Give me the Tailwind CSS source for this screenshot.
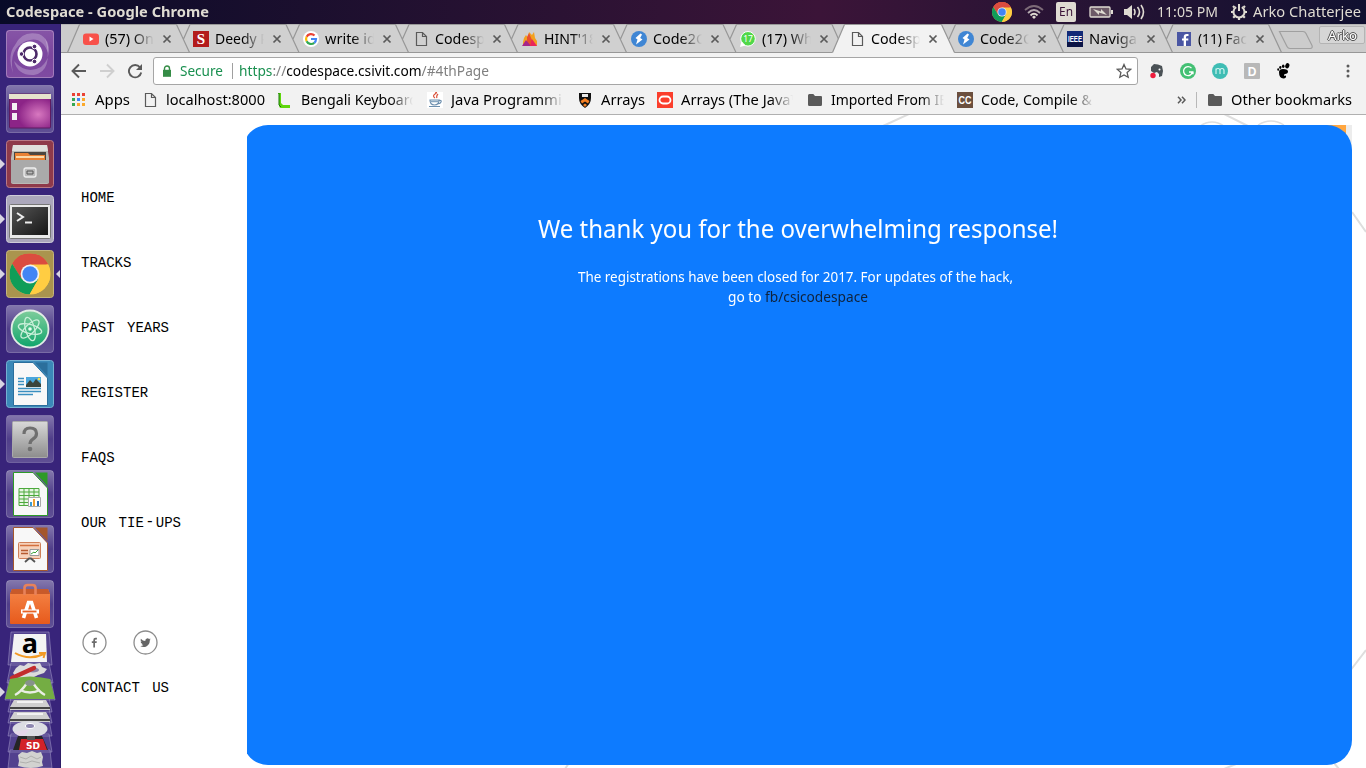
<!DOCTYPE html>
<html lang="en">
<head>
<meta charset="utf-8">
<title>Codespace</title>
<script src="https://cdn.jsdelivr.net/npm/@tailwindcss/browser@4"></script>
</head>
<body class="w-[1366px] h-[768px] overflow-hidden flex flex-col bg-white text-black text-[14px] leading-[20px] font-['Noto_Sans',sans-serif]">

<!-- Shared symbols -->
<svg class="absolute w-0 h-0">
  <symbol id="chrome" viewBox="0 0 48 48">
    <circle cx="24" cy="24" r="24" fill="#ffcd42"/>
    <path d="M24 24 L3.2 12 A24 24 0 0 1 44.8 12 Z" fill="#db4437"/>
    <path d="M24 13 H45.3 A24 24 0 0 0 3.2 12 L14 30 Z" fill="#db4c3f"/>
    <path d="M3.2 12 A24 24 0 0 0 23.5 48 L34 29.5 L24 24 L14.5 30 Z" fill="#109d58"/>
    <path d="M45.3 13 H24 L34 29.5 L23.5 48 A24 24 0 0 0 45.3 13Z" fill="#ffcd42"/>
    <circle cx="24" cy="24" r="11" fill="#f1f1f1"/><circle cx="24" cy="24" r="9" fill="#4285f4"/>
  </symbol>
  <symbol id="page" viewBox="0 0 16 16"><path d="M3.5 1.5h6l4 4v9h-10z M9.5 1.5v4h4" fill="none" stroke="#5a5a5a" stroke-width="1.2"/></symbol>
  <symbol id="folder" viewBox="0 0 16 16"><path d="M1 3.5Q1 2 2.3 2h4l1.7 2h6Q15 4 15 5.300v7.2Q15 14 13.700 14H2.3Q1 14 1 12.500z" fill="#5a5a5a"/></symbol>
  <symbol id="x" viewBox="0 0 10 10"><path d="M1.500 1.500l7 7M8.500 1.500l-7 7" stroke="#5a5a5a" stroke-width="1.700"/></symbol>
  <symbol id="bolt" viewBox="0 0 16 16"><circle cx="8" cy="8" r="8" fill="#3f86d4"/><path d="M9.500 2.500L4.500 7l2 1.500L5 13.500l6.500-5-2.300-1.500L11 3.500z" fill="#fff"/></symbol>
  <linearGradient id="gl" x2="0" y2="1"><stop stop-color="#fff" stop-opacity=".38"/><stop offset=".5" stop-color="#fff" stop-opacity=".12"/><stop offset="1" stop-color="#fff" stop-opacity=".2"/></linearGradient>
  <radialGradient id="pk" cx=".7" cy=".6"><stop stop-color="#d878c0"/><stop offset="1" stop-color="#8c2487"/></radialGradient>
  <linearGradient id="gr" x2="0" y2="1"><stop stop-color="#d8d8d8"/><stop offset="1" stop-color="#8d8d8d"/></linearGradient>
  <linearGradient id="dk" x2="1" y2="1"><stop stop-color="#555"/><stop offset="1" stop-color="#151515"/></linearGradient>
  <linearGradient id="at" x2="0" y2="1"><stop stop-color="#7fcd9c"/><stop offset="1" stop-color="#0fa56b"/></linearGradient>
  <linearGradient id="og" x2="0" y2="1"><stop stop-color="#f58547"/><stop offset="1" stop-color="#e75a1c"/></linearGradient>
  <symbol id="doc" viewBox="0 0 48 48"><path d="M7.500 2.500H27L41.500 18v27.500H7.500z" fill="#f8f8f8" stroke="currentColor"/><path d="M29 2.500h12.500V16z" fill="currentColor"/></symbol>
</svg>

<!-- Top panel -->
<header class="h-[24px] shrink-0 flex items-center pl-[6px] pr-[5px] text-[#dfdbd2] bg-linear-to-r from-[#080a28] via-[#3b1438] via-60% to-[#101030]">
  <span data-w="203" class="font-bold">Codespace - Google Chrome</span>
  <div class="ml-auto flex items-center">
    <svg class="w-[20px] h-[20px] mr-[12px]"><use href="#chrome"/></svg>
    <svg class="w-[20px] h-[16px] mr-[12px]" viewBox="0 0 20 16" fill="none" stroke-width="1.800"><path d="M1 6Q10-2 19 6" stroke="#7d6b78"/><path d="M4 9Q10 3 16 9" stroke="#b5aab0"/><path d="M6.500 11.500Q10 8 13.500 11.500" stroke="#dfdbd2"/><path d="M8 13l2-1.500 2 1.500-2 2z" fill="#dfdbd2"/></svg>
    <span class="w-[20px] h-[20px] mr-[13px] rounded-[2px] bg-[#dfdbd2] text-[#3b1438] text-[12px] leading-[20px] flex justify-center"><span data-w="14">En</span></span>
    <svg class="w-[24px] h-[12px] mr-[11px]" viewBox="0 0 24 12"><rect x="1" y="1" width="20" height="10" rx="1" fill="#6d5a68" stroke="#dfdbd2" stroke-width="1.300"/><path d="M22 4h2v4h-2z" fill="#dfdbd2"/><path d="M4 3l8 2.500V3l6 6-8-2.500V9z" fill="#dfdbd2"/></svg>
    <svg class="w-[21px] h-[16px] mr-[12px]" viewBox="0 0 21 16" fill="none" stroke="#dfdbd2" stroke-width="1.600"><path d="M0 5h3l5-4v14l-5-4H0z" fill="#dfdbd2" stroke="none"/><path d="M10 5q2 3 0 6M13.500 3q4 5 0 10M17 1q5 7 0 14"/></svg>
    <span data-w="61">11:05 PM</span>
    <svg class="w-[18px] h-[18px] ml-[12px] mr-[5px]" viewBox="0 0 18 18" fill="none" stroke="#dfdbd2"><path d="M6.200 4.200a5.500 5.500 0 1 0 5.600 0" stroke-width="2"/><path d="M9 1v7" stroke-width="2"/><path d="M9 14.500V17M3.500 9H1M17 9h-2.500M5 13l-1.800 1.800M13 13l1.800 1.800M4.500 4.500L3 3M13.500 4.500L15 3" stroke-width="2.200"/></svg>
    <span data-w="108">Arko Chatterjee</span>
  </div>
</header>

<div class="flex flex-1 min-h-0">
<!-- Launcher -->
<aside class="w-[61px] shrink-0 h-[744px] pt-[6px] pl-[6px] flex flex-col gap-[7px] bg-[#38247a] border-r border-[#2d1d66] relative overflow-hidden">
  <svg class="size-[48px] shrink-0" viewBox="0 0 48 48"><rect width="48" height="48" rx="3" fill="#773f9b"/><path d="M7 43Q2 19 20 11Q36 5 42 23Q45 10 33 4Q16 0 9 15Q1 25 7 43z" fill="#fff" opacity=".25"/><path d="M39 8Q48 26 35 37Q20 45 8 31Q12 46 28 45Q48 41 39 8z" fill="#fff" opacity=".25"/><circle cx="24" cy="24" r="12.500" fill="#fff"/><circle cx="24" cy="24" r="6.500" fill="none" stroke="#442062" stroke-width="2.600"/><g fill="#442062" stroke="#fff"><circle cx="15.500" cy="24" r="2.300"/><circle cx="28.500" cy="16.500" r="2.300"/><circle cx="28.500" cy="31.500" r="2.300"/></g><rect x=".5" y=".5" width="47" height="47" rx="3" fill="url(#gl)" fill-opacity=".3" stroke="#fff" stroke-opacity=".3"/></svg>
  <svg class="size-[48px] shrink-0" viewBox="0 0 48 48"><rect x=".5" y=".5" width="47" height="47" rx="3" fill="url(#gl)" stroke="#fff" stroke-opacity=".25"/><rect x="3.500" y="9" width="41" height="34" rx="1" fill="url(#pk)" stroke="#5e1b60"/><path d="M3 9h42v5H3z" fill="#e6e3cc"/><path d="M6 18h5v7H6zM6 28h5v7H6z" fill="#f4f0f4"/></svg>
  <svg class="size-[48px] shrink-0" viewBox="0 0 48 48"><rect x=".5" y=".5" width="47" height="47" rx="3" fill="#8e3a4a" stroke="#b97a86"/><path d="M7 5h34l2 13v24q0 2-2 2H7q-2 0-2-2V18z" fill="#b9b9b5"/><path d="M7 5h34l1 6H6z" fill="#e0e0dd"/><path d="M8 12h32v10H8z" fill="#4c4640"/><path d="M9 13h13l2 2h15v6H9z" fill="#e98134"/><path d="M10 17h28" stroke="#fbd9a9" stroke-width="2"/><path d="M5 20h38v23H5z" fill="#aaa"/><rect x="18" y="28" width="12" height="9" rx="2" fill="#bbb" stroke="#eee" stroke-width="1.300"/><path d="M21 31h6v3h-6z" fill="none" stroke="#555"/></svg>
  <svg class="size-[48px] shrink-0" viewBox="0 0 48 48"><rect x=".5" y=".5" width="47" height="47" rx="3" fill="#aba7bb" stroke="#cfccd8"/><rect x="3.500" y="9.500" width="41" height="34" rx="1" fill="#e9e9e9" stroke="#777"/><rect x="6" y="12" width="36" height="28" fill="url(#dk)"/><path d="M11 18l6 4-6 4M19 27.500h7" fill="none" stroke="#eee" stroke-width="2"/></svg>
  <svg class="size-[48px] shrink-0" viewBox="0 0 48 48"><rect x=".5" y=".5" width="47" height="47" rx="3" fill="#aa944e" stroke="#c5b57e"/><use href="#chrome" x="3.500" y="3.500" width="41" height="41"/></svg>
  <svg class="size-[48px] shrink-0" viewBox="0 0 48 48"><rect x=".5" y=".5" width="47" height="47" rx="3" fill="url(#gl)" stroke="#fff" stroke-opacity=".25"/><circle cx="24" cy="24" r="18.500" fill="url(#at)" stroke="#e2ede6" stroke-width="1.800"/><g fill="none" stroke="#c9efd9" stroke-width="1.300"><ellipse cx="24" cy="24" rx="12" ry="4.500" transform="rotate(15 24 24)"/><ellipse cx="24" cy="24" rx="12" ry="4.500" transform="rotate(75 24 24)"/><ellipse cx="24" cy="24" rx="12" ry="4.500" transform="rotate(135 24 24)"/></g><circle cx="24" cy="24" r="1.800" fill="#e6fff0"/></svg>
  <svg class="size-[48px] shrink-0 text-[#2b6f9c]" viewBox="0 0 48 48"><rect x=".5" y=".5" width="47" height="47" rx="3" fill="#3b88b8" stroke="#75b0d2"/><use href="#doc"/><path d="M12 18.500h6M12 21.500h6M12 24.500h6M12 28.500h23M12 31.500h23M12 34.500h15" stroke="#3a8fc0" stroke-width="1.500"/><path d="M20 17h15v10H20z" fill="#4ba7dc"/><path d="M20 25l4-5 3 3 3-4 5 5v3H20z" fill="#39443c"/><circle cx="33" cy="19" r="1.300" fill="#f3e14c"/></svg>
  <svg class="size-[48px] shrink-0" viewBox="0 0 48 48"><rect x=".5" y=".5" width="47" height="47" rx="3" fill="url(#gl)" stroke="#fff" stroke-opacity=".2"/><rect x="6.500" y="6.500" width="35" height="36" rx="1" fill="url(#gr)" stroke="#aaa"/><path d="M18 19q0-6 6-6 6.500 0 6.500 5.500 0 3.500-3.500 5.500-3 2-3 5" fill="none" stroke="#6f6f6f" stroke-width="3.200"/><circle cx="24" cy="34" r="2.300" fill="#6f6f6f"/></svg>
  <svg class="size-[48px] shrink-0 text-[#2e9a28]" viewBox="0 0 48 48"><rect x=".5" y=".5" width="47" height="47" rx="3" fill="url(#gl)" stroke="#fff" stroke-opacity=".25"/><use href="#doc"/><path d="M13 18.500h20v17H13zM13 22h20M13 25.500h20M13 29h20M13 32.500h20M18 18v17M23 18v17M28 18v17" fill="#e8f6e4" stroke="#4da93d"/><path d="M22.500 27.500h12v9h-12z" fill="#fff" stroke="#aaa"/><path d="M24 32h2v4h-2z" fill="#3d9bd0"/><path d="M27 29h2v7h-2z" fill="#f0a030"/><path d="M31 31h2v5h-2z" fill="#2a6db3"/></svg>
  <svg class="size-[48px] shrink-0 text-[#a4562c]" viewBox="0 0 48 48"><rect x=".5" y=".5" width="47" height="47" rx="3" fill="url(#gl)" stroke="#fff" stroke-opacity=".25"/><use href="#doc"/><rect x="12.500" y="17.500" width="22" height="16" rx="1" fill="#f6d2bc" stroke="#cf8059"/><path d="M14 20.500h19" stroke="#d4703f" stroke-width="1.500"/><path d="M15 25.500h7M15 28.500h7" stroke="#b65a30" stroke-width="1.500"/><path d="M24 24.500h9v6h-9z" fill="#fff" stroke="#999"/><path d="M25 29l3-2 1 1 3-3" fill="none" stroke="#3aa33a"/><path d="M19 37l4-3.500h2l4 3.500" fill="none" stroke="#555" stroke-width="1.800"/></svg>
  <svg class="size-[48px] shrink-0" viewBox="0 0 48 48"><rect x=".5" y=".5" width="47" height="47" rx="3" fill="url(#gl)" stroke="#fff" stroke-opacity=".25"/><path d="M6 9h36l2 5v29q0 1-1 1H5q-1 0-1-1V14z" fill="url(#og)"/><path d="M6 9h36l2 5H4z" fill="#c85a2a"/><path d="M18.500 15V8q0-3 3-3h5q3 0 3 3v7" fill="none" stroke="#e8825a" stroke-width="2.600"/><path d="M17.500 38l5-15.500h3l5 15.500" fill="none" stroke="#fff" stroke-width="3.600"/><path d="M15 31.500h18" stroke="#fff" stroke-width="4.200"/><path d="M16.500 31.500h14" stroke="#e96224" stroke-width="1.800"/></svg>
  <svg class="w-[61px] h-[140px] shrink-0 -ml-[6px] -mt-[7px]" viewBox="0 628 61 140">
    <g fill="#8f84bd" fill-opacity=".3" stroke="#a9a0cd" stroke-opacity=".5"><path d="M11 632h38l3 33H8zM11 663h38l4 20H7zM9 680h42l4 20H5zM11 698h38l3 14H8zM11 709h38l3 14H8zM11 720h38l3 16H8zM11 734h38l3 18H8zM10 750h40l2 18H8z"/></g>
    <path d="M14 634h32l1 28H11z" fill="#f3f3f3"/>
    <text x="30" y="653" text-anchor="middle" class="font-['Open_Sans'] font-bold" font-size="27">a</text>
    <path d="M15 653q14 8 29 1M39 653l6 0-1.500 5" fill="none" stroke="#f29a25" stroke-width="2"/>
    <path d="M16 668l4-3 4 1 4-3 6 1 6-1 2 4 5 2-3 4-6 2-6 3-8 1-8-2-3-4z" fill="#dcdcdc"/><ellipse cx="33" cy="670" rx="6" ry="2.500" fill="#8c86a8"/>
    <path d="M12 678L34 668" stroke="#c32d2d" stroke-width="4.500" stroke-linecap="round"/>
    <path d="M10 679q20-5 40 0l5 20H5z" fill="#74ad43"/><path d="M15 695Q21 692 27 683M45 695Q39 692 33 683M20 690q10 5 20 0" fill="none" stroke="#e9eee3" stroke-width="2.300"/><ellipse cx="30" cy="683" rx="5" ry="3" fill="#86928a"/>
    <path d="M14 700h32l4 7v3H10v-3zM14 712h32l4 7v3H10v-3z" fill="#cfcfcf"/><path d="M10 708h40M10 720h40" stroke="#444" stroke-width="2"/><path d="M17 702h26M17 714h26" stroke="#f2f2f2" stroke-width="2"/>
    <ellipse cx="30" cy="729" rx="17.500" ry="8" fill="#dcdde3"/><path d="M30 729L14 732q3 4 9 5z" fill="#e4d6e9"/><ellipse cx="30" cy="726" rx="4.500" ry="2.500" fill="#8e88b0" stroke="#fff"/>
    <path d="M18 736h24l6 14H13z" fill="#252525"/><path d="M21 739h22l4 11H19z" fill="#d3222a"/><path d="M27 736h8v4h-8z" fill="#555"/><text x="33" y="749" text-anchor="middle" class="font-['DejaVu_Sans'] font-bold" font-size="9" fill="#fff">SD</text>
    <path d="M18 755l4-3 5 1 5-2 5 2 4-1 2 5-1 5 1 4q-12 4-25 0l1-5z" fill="#d2d2d0"/><path d="M20 757l6 2 5-3 6 3 4-2M20 762l6 1 6-2 8 2" fill="none" stroke="#b0b0ae"/>
  </svg>
  <!-- running-window pips -->
  <svg class="absolute left-0 top-0 w-[61px] h-[744px]" viewBox="0 24 61 744" fill="#d8d5e2"><path d="M0 159l5 5-5 5zM0 214l5 5-5 5zM0 269l5 5-5 5zM0 379l5 5-5 5zM0 687l5 5-5 5zM61 269l-5 5 5 5z"/></svg>
</aside>

<main class="flex-1 min-w-0 flex flex-col">
  <!-- Tab strip -->
  <div class="h-[29px] shrink-0 relative flex bg-[#cccccc]">
    <svg class="absolute inset-0 w-[1305px] h-[29px]" viewBox="61 24 1305 29" fill="none" stroke="#979797" stroke-width="1.200">
      <path fill="#d0d0d0" stroke="none" d="M67 53L80 24.500H1269L1281 53z"/>
      <path d="M61 24.500H1366" stroke="#b5b5b5"/>
      <path d="M61 52.500H832.500M954 52.500H1366"/>
      <path d="M67.500 52.500L79.500 24.500H176.500L189.500 52.500M183.500 39L190 24.500H286L299 52.500M293 39L299.500 24.500H395.500L408.500 52.500M402.500 39L409 24.500H504.500L517.500 52.500M511.500 39L518 24.500H613.500L626.500 52.500M620.500 39L627 24.500H723L736 52.500M730 39L736.500 24.500H832L838.500 39M949 39L955.500 24.500H1050.500L1063.500 52.500M1057.500 39L1064 24.500H1159.500L1172.500 52.500M1166.500 39L1173 24.500H1268.500L1281.500 52.500"/>
      <path d="M832.500 53L844.500 24.500H941.500L954.500 53z" fill="#f2f2f2" stroke="none"/><path d="M832.500 52.500L844.500 24.500H941.500L954.500 52.500"/>
      <path d="M1279.500 31.500H1303q2 0 3 2l6 12q1 3-2 3H1290q-2 0-3-2z" stroke="#a0a0a0"/>
    </svg>
    <div class="relative flex items-center pl-[22px] h-[30px] w-full">
      <div class="w-[110px] shrink-0 flex items-center"><svg class="w-[16px] h-[16px] mr-[6px]" viewBox="0 0 16 16"><rect x="0" y="2.500" width="16" height="11.500" rx="3" fill="#f8514a"/><path d="M6.500 5.500v5l4-2.500z" fill="#fff"/></svg><span class="w-[50px] overflow-hidden whitespace-nowrap [mask-image:linear-gradient(to_right,black_55%,transparent_98%)]"><span data-w="49">(57) On</span></span><svg class="w-[10px] h-[10px] ml-[7px]"><use href="#x"/></svg></div>
      <div class="w-[110px] shrink-0 flex items-center"><svg class="w-[16px] h-[16px] mr-[6px]" viewBox="0 0 16 16"><rect width="16" height="16" fill="#b31b1b"/><text x="8" y="13" text-anchor="middle" class="font-['Liberation_Serif'] font-bold" font-size="15" fill="#fff">S</text></svg><span class="w-[50px] overflow-hidden whitespace-nowrap [mask-image:linear-gradient(to_right,black_55%,transparent_98%)]"><span data-w="54">Deedy R</span></span><svg class="w-[10px] h-[10px] ml-[7px]"><use href="#x"/></svg></div>
      <div class="w-[110px] shrink-0 flex items-center"><svg class="w-[16px] h-[16px] mr-[6px]" viewBox="0 0 16 16" fill="none" stroke-width="2.200"><circle cx="8" cy="8" r="8" fill="#fff"/><path d="M11.500 4.500A5 5 0 0 0 3.600 5.800" stroke="#ea4335"/><path d="M3.600 5.800a5 5 0 0 0 0 4.400" stroke="#fbbc05"/><path d="M3.600 10.200a5 5 0 0 0 7.700 1.600" stroke="#34a853"/><path d="M11.300 11.800A5 5 0 0 0 13 8H8" stroke="#4285f4"/></svg><span class="w-[50px] overflow-hidden whitespace-nowrap [mask-image:linear-gradient(to_right,black_55%,transparent_98%)]"><span data-w="51">write id</span></span><svg class="w-[10px] h-[10px] ml-[7px]"><use href="#x"/></svg></div>
      <div class="w-[109px] shrink-0 flex items-center"><svg class="w-[16px] h-[16px] mr-[6px]"><use href="#page"/></svg><span class="w-[50px] overflow-hidden whitespace-nowrap [mask-image:linear-gradient(to_right,black_55%,transparent_98%)]"><span data-w="50">Codesp</span></span><svg class="w-[10px] h-[10px] ml-[7px]"><use href="#x"/></svg></div>
      <div class="w-[109px] shrink-0 flex items-center"><svg class="w-[16px] h-[16px] mr-[6px]" viewBox="0 0 16 16"><path d="M2 7l2-3 2 3 1-6 3 3 2-3 1 6 2 3v5H1v-4z" fill="#f3a01e"/><path d="M5 15V6l2-4 3 7v6z" fill="#e94e2e"/><path d="M0 15l4-6 5 6z" fill="#a5258a"/><path d="M8 15l2-7 5 7z" fill="#e9265c"/></svg><span class="w-[50px] overflow-hidden whitespace-nowrap [mask-image:linear-gradient(to_right,black_55%,transparent_98%)]"><span data-w="53">HINT'18</span></span><svg class="w-[10px] h-[10px] ml-[7px]"><use href="#x"/></svg></div>
      <div class="w-[109px] shrink-0 flex items-center"><svg class="w-[16px] h-[16px] mr-[6px]"><use href="#bolt"/></svg><span class="w-[50px] overflow-hidden whitespace-nowrap [mask-image:linear-gradient(to_right,black_55%,transparent_98%)]"><span data-w="52">Code2C</span></span><svg class="w-[10px] h-[10px] ml-[7px]"><use href="#x"/></svg></div>
      <div class="w-[109px] shrink-0 flex items-center"><svg class="w-[16px] h-[16px] mr-[6px]" viewBox="0 0 16 16"><circle cx="8" cy="7.800" r="7.300" fill="#51d84a" stroke="#fff"/><path d="M0 16l1.500-6 4 4.500z" fill="#fff"/><text x="8" y="11.300" text-anchor="middle" class="font-['Noto_Sans']" font-size="8.500" fill="#fff">17</text></svg><span class="w-[50px] overflow-hidden whitespace-nowrap [mask-image:linear-gradient(to_right,black_55%,transparent_98%)]"><span data-w="51">(17) Wh</span></span><svg class="w-[10px] h-[10px] ml-[7px]"><use href="#x"/></svg></div>
      <div class="w-[109px] shrink-0 flex items-center"><svg class="w-[16px] h-[16px] mr-[6px]"><use href="#page"/></svg><span class="w-[50px] overflow-hidden whitespace-nowrap [mask-image:linear-gradient(to_right,black_55%,transparent_98%)]"><span data-w="50">Codesp</span></span><svg class="w-[10px] h-[10px] ml-[7px]"><use href="#x"/></svg></div>
      <div class="w-[109px] shrink-0 flex items-center"><svg class="w-[16px] h-[16px] mr-[6px]"><use href="#bolt"/></svg><span class="w-[50px] overflow-hidden whitespace-nowrap [mask-image:linear-gradient(to_right,black_55%,transparent_98%)]"><span data-w="52">Code2C</span></span><svg class="w-[10px] h-[10px] ml-[7px]"><use href="#x"/></svg></div>
      <div class="w-[109px] shrink-0 flex items-center"><svg class="w-[16px] h-[16px] mr-[6px]" viewBox="0 0 16 16"><rect width="16" height="16" fill="#122a78"/><path d="M0 11h16v5H0z" fill="#0b1446"/><text x="1" y="11" textLength="14" lengthAdjust="spacingAndGlyphs" class="font-['Liberation_Sans'] font-bold" font-size="9" fill="#fff">IEEE</text></svg><span class="w-[50px] overflow-hidden whitespace-nowrap [mask-image:linear-gradient(to_right,black_55%,transparent_98%)]"><span data-w="48">Naviga</span></span><svg class="w-[10px] h-[10px] ml-[7px]"><use href="#x"/></svg></div>
      <div class="w-[109px] shrink-0 flex items-center"><svg class="w-[16px] h-[16px] mr-[6px]" viewBox="0 0 16 16"><rect x="1" y="1" width="14" height="14" fill="#4a56a3"/><path d="M10 15V9.500h2.300V7.500H10V6.300q0-1.300 1.300-1.300h1.200V3H10.700Q7.700 3 7.700 6v1.500H6v2h1.700V15z" fill="#fff"/></svg><span class="w-[50px] overflow-hidden whitespace-nowrap [mask-image:linear-gradient(to_right,black_55%,transparent_98%)]"><span data-w="49">(11) Fac</span></span><svg class="w-[10px] h-[10px] ml-[7px]"><use href="#x"/></svg></div>
      <div class="ml-auto mr-[1px] mb-[8px] w-[46px] h-[18px] shrink-0 border border-[#b4b4b4] rounded-[2px] bg-[#d6d6d6] text-[13px] leading-[16px] flex justify-center text-white [text-shadow:1px_0_0_#555,-1px_0_0_#555,0_1px_0_#555,0_-1px_0_#555]"><span data-w="29">Arko</span></div>
    </div>
  </div>

  <!-- Toolbar -->
  <div class="h-[35px] shrink-0 bg-[#f2f2f2] flex items-center pl-[10px]">
    <svg class="w-[16px] h-[16px] mr-[12px]" viewBox="0 0 16 16" fill="none" stroke="#5a5a5a" stroke-width="1.900"><path d="M15 8H2M8 1.500L1.500 8 8 14.500"/></svg>
    <svg class="w-[16px] h-[16px] mr-[12px]" viewBox="0 0 16 16" fill="none" stroke="#cfcfcf" stroke-width="1.900"><path d="M1 8h13M8 1.500L14.500 8 8 14.500"/></svg>
    <svg class="w-[16px] h-[16px] mr-[10px]" viewBox="0 0 16 16" fill="none" stroke="#5a5a5a" stroke-width="1.900"><path d="M13 4.300A6.200 6.200 0 1 0 14.200 9.500"/><path d="M15 1v6H9z" fill="#5a5a5a" stroke="none"/></svg>
    <div class="w-[985px] h-[28px] border border-[#a6a6a6] rounded-[3px] bg-white flex items-center whitespace-nowrap">
      <svg class="w-[10px] h-[12px] ml-[8px] mr-[8px]" viewBox="0 0 10 12"><path d="M1 4.800h8v7H1z" fill="#358c46"/><path d="M2.500 5V3.500a2.500 2.500 0 0 1 5 0V5" fill="none" stroke="#358c46" stroke-width="1.400"/></svg>
      <span data-w="43" class="text-[#1a9050]">Secure</span>
      <span class="w-px h-[16px] bg-[#a0a0a0] ml-[9px] mr-[6px]"></span>
      <span data-w="250"><span class="text-[#1a9050]">https</span><span class="text-[#808080]">://</span>codespace.csivit.com<span class="text-[#808080]">/#4thPage</span></span>
      <svg class="w-[16px] h-[16px] ml-auto mr-[5px]" viewBox="0 0 16 16"><path d="M8 1.500l2 4.500 4.700.4-3.600 3.200 1.100 4.700L8 11.900l-4.200 2.400 1.100-4.700L1.300 6.400 6 6z" fill="none" stroke="#5a5a5a" stroke-width="1.300"/></svg>
    </div>
    <svg class="w-[16px] h-[16px] ml-[11px] mr-[15px]" viewBox="0 0 16 16"><path d="M2 4l3-3 4 .5 4 1.500 1 5-1 5-3 1v-3l-2-2-3 1-3-2z" fill="#4b5256"/><circle cx="10.500" cy="6.500" r="1" fill="#fff"/><circle cx="4" cy="12.500" r="2.700" fill="#ee1c3c"/></svg>
    <svg class="w-[16px] h-[16px] mr-[16px]" viewBox="0 0 16 16"><circle cx="8" cy="8" r="8" fill="#44c074"/><path d="M11.500 5.200A4.500 4.500 0 1 0 12.500 9H9M11 10.500h2V8.500" fill="none" stroke="#fff" stroke-width="1.300"/></svg>
    <svg class="w-[16px] h-[16px] mr-[16px]" viewBox="0 0 16 16"><circle cx="8" cy="8" r="8" fill="#3fbdb4"/><path d="M4 11V5.500M4 7q0-1.500 2-1.500T8 7.500V11M8 7.500q0-2 2-2t2 2V11" fill="none" stroke="#d9f7f3" stroke-width="1.100"/></svg>
    <svg class="w-[16px] h-[16px] mr-[16px]" viewBox="0 0 16 16"><rect width="16" height="16" rx="1" fill="#b8b8b8"/><text x="8" y="12.500" text-anchor="middle" class="font-['Liberation_Sans'] font-bold" font-size="12" fill="#fff">D</text></svg>
    <svg class="w-[16px] h-[16px]" viewBox="0 0 16 16"><ellipse cx="11.300" cy="2.800" rx="2" ry="2.700" transform="rotate(20 11.300 2.800)"/><ellipse cx="7.200" cy="3.300" rx="1.300" ry="1.700"/><ellipse cx="4.300" cy="4.500" rx="1.100" ry="1.400"/><ellipse cx="2.200" cy="6.500" rx=".9" ry="1.200"/><path d="M3 9q0-3 4-3 5 0 5 2.500 0 2-3 2.500-1.500.5-1 1.500.5.700 2 0 .5 3-2.500 3Q3 15.500 3 9z"/></svg>
    <svg class="w-[4px] h-[14px] ml-auto mr-[16px]" viewBox="0 0 4 14" fill="#5a5a5a"><circle cx="2" cy="2" r="1.500"/><circle cx="2" cy="7" r="1.500"/><circle cx="2" cy="12" r="1.500"/></svg>
  </div>

  <!-- Bookmarks bar -->
  <div class="h-[27px] pb-[3px] shrink-0 bg-[#f2f2f2] border-b border-[#b0b0b0] flex items-center pl-[10px] whitespace-nowrap">
    <div class="w-[71px] flex items-center"><svg class="w-[16px] h-[16px] mr-[8px]" viewBox="0 0 16 16"><path d="M1 1h3v3H1zM6 1h3v3H6zM11 1h3v3h-3z" fill="#ea4335"/><path d="M1 6h3v3H1z" fill="#34a853"/><path d="M6 6h3v3H6z" fill="#4285f4"/><path d="M11 6h3v3h-3zM6 11h3v3H6zM11 11h3v3h-3z" fill="#fba92c"/><path d="M1 11h3v3H1z" fill="#34a853"/></svg><span data-w="35">Apps</span></div>
    <div class="w-[135px] flex items-center"><svg class="w-[16px] h-[16px] mr-[8px]"><use href="#page"/></svg><span data-w="99">localhost:8000</span></div>
    <div class="w-[150px] flex items-center"><svg class="w-[16px] h-[16px] mr-[8px]" viewBox="0 0 16 16"><path d="M1 1h3v10l2 2h7v3H4q-2 0-2-3V2H1z" fill="#5fd60d"/><path d="M2 1v12l2 2" fill="none" stroke="#167708"/></svg><span class="w-[112px] overflow-hidden [mask-image:linear-gradient(to_right,black_80%,transparent)]"><span data-w="117">Bengali Keyboard</span></span></div>
    <div class="w-[150px] flex items-center"><svg class="w-[16px] h-[16px] mr-[8px]" viewBox="0 0 16 16" fill="none"><rect width="16" height="16" fill="#fff"/><path d="M8 6Q5 4 8 2T8 0M10 6q-1-2 1-4" stroke="#d9533c" stroke-width="1.200"/><path d="M3 8h9q0 5-4.500 5T3 8zM12 8.500q3-.5 2 1.500t-3 1.500M2 14.500h11" stroke="#6d8fae" stroke-width="1.200"/><path d="M4 9.500h7" stroke="#8aa8c2" stroke-width="1.500"/></svg><span class="w-[112px] overflow-hidden [mask-image:linear-gradient(to_right,black_80%,transparent)]"><span data-w="120">Java Programmin</span></span></div>
    <div class="w-[80px] flex items-center"><svg class="w-[16px] h-[16px] mr-[8px]" viewBox="0 0 16 16"><path d="M2 1h12v5q0 6-6 10Q2 12 2 6z" fill="#111"/><path d="M5 2h6v3H5z" fill="#e8e8e8"/><path d="M3.500 9L8 6l4.500 3-1.500 2.500L8 9.500l-3 2z" fill="#f58025"/><path d="M6 13l2-1.500L10 13l-2 2z" fill="#f58025"/></svg><span data-w="44">Arrays</span></div>
    <div class="w-[150px] flex items-center"><svg class="w-[16px] h-[16px] mr-[8px]" viewBox="0 0 16 16"><rect width="16" height="16" fill="#fb3e2c"/><rect x="2.500" y="4.500" width="11" height="7" rx="3.500" fill="none" stroke="#fff" stroke-width="1.800"/></svg><span class="w-[112px] overflow-hidden [mask-image:linear-gradient(to_right,black_80%,transparent)]"><span data-w="121">Arrays (The Java™</span></span></div>
    <div class="w-[150px] flex items-center"><svg class="w-[16px] h-[16px] mr-[8px]"><use href="#folder"/></svg><span class="w-[113px] overflow-hidden [mask-image:linear-gradient(to_right,black_80%,transparent)]"><span data-w="116">Imported From IE</span></span></div>
    <div class="w-[150px] flex items-center"><svg class="w-[16px] h-[16px] mr-[8px]" viewBox="0 0 16 16"><rect width="16" height="16" fill="#6b4f3e"/><text x="1.500" y="11.500" textLength="13" lengthAdjust="spacingAndGlyphs" class="font-['Liberation_Sans'] font-bold" font-size="10" fill="#fff">CC</text></svg><span class="w-[113px] overflow-hidden [mask-image:linear-gradient(to_right,black_80%,transparent)]"><span data-w="111">Code, Compile &amp;</span></span></div>
    <svg class="w-[9px] h-[8px] ml-auto mr-[10px]" viewBox="0 0 9 8" fill="none" stroke="#5a5a5a" stroke-width="1.500"><path d="M1 .8L4 4 1 7.200M5 .8L8 4 5 7.200"/></svg>
    <span class="w-px h-[16px] bg-[#b8b8b8] mr-[10px]"></span>
    <svg class="w-[16px] h-[16px] mr-[8px]"><use href="#folder"/></svg><span class="mr-[14px]"><span data-w="121">Other bookmarks</span></span>
  </div>

  <!-- Page -->
  <div class="flex-1 min-h-0 relative flex bg-white overflow-hidden">
    <svg class="absolute inset-0 w-[1305px] h-[653px]" viewBox="61 115 1305 653" fill="none" stroke="#dedede" stroke-width="2">
      <path d="M883 126L909 114M1224 114L1250 127M1352 212l14 20M1350 671l16-21M1224 769l12-5M1334 763l5 6M565 769l4-6" />
      <path d="M1200 126q12-8 24 0M1258 125q13-8 26 0" stroke-width="1.300"/>
      <path d="M1322 125h24v24h-24z" fill="#ffa640" stroke="none"/><path d="M1346 125h6v30h-6z" fill="#ececec" stroke="none"/>
    </svg>
    <nav class="relative w-[186px] shrink-0 pl-[20px] pt-[73px] flex flex-col text-[14px] leading-[20px] font-['Liberation_Mono',monospace] [word-spacing:4px]">
      <a class="h-[65px]">HOME</a><a class="h-[65px]">TRACKS</a><a class="h-[65px]">PAST YEARS</a><a class="h-[65px]">REGISTER</a><a class="h-[65px]">FAQS</a><a class="h-[65px] flex">OUR&nbsp;TIE<span class="w-[12px] -mt-[2px] flex justify-center font-['DejaVu_Sans_Mono',monospace] text-[16px]">-</span>UPS</a>
      <div class="flex gap-[26px] pl-[1px] pt-[52px]">
        <svg class="w-[25px] h-[25px]" viewBox="0 0 25 25"><circle cx="12.500" cy="12.500" r="11.500" fill="#fff" stroke="#8d8d8d" stroke-width="1.300"/><path d="M11.300 17.500V13H9.800v-1.700h1.500V10q0-2.300 2.200-2.300h1.400v1.700h-1q-.9 0-.9.900v1h1.800L14.600 13H13v4.500z" fill="#6c6c6c"/></svg>
        <svg class="w-[25px] h-[25px]" viewBox="0 0 25 25"><circle cx="12.500" cy="12.500" r="11.500" fill="#fff" stroke="#8d8d8d" stroke-width="1.300"/><path transform="translate(7.300 7.200) scale(.44)" d="M23.600 5a10 10 0 0 1-2.800.8A4.900 4.900 0 0 0 23 3.100a10 10 0 0 1-3.100 1.200 4.900 4.900 0 0 0-8.400 4.500A14 14 0 0 1 1.400 3.600a4.900 4.900 0 0 0 1.500 6.600 4.900 4.900 0 0 1-2.200-.6 4.900 4.900 0 0 0 4 4.900 5 5 0 0 1-2.300.1 4.900 4.900 0 0 0 4.600 3.400A10 10 0 0 1 0 20a14 14 0 0 0 21.500-12.500A10 10 0 0 0 23.600 5z" fill="#666"/></svg>
      </div>
      <a class="pt-[23px]">CONTACT US</a>
    </nav>
    <div class="relative w-[1105px] h-[640px] mt-[10px] overflow-hidden">
      <section class="h-[640px] -ml-[4px] pl-[4px] rounded-[25px] bg-[#0d7bff] text-white flex flex-col items-center pt-[86px]">
        <h1 class="pr-[4px] text-[26px] leading-[34px] whitespace-nowrap"><span data-w="520">We thank you for the overwhelming response!</span></h1>
        <p class="pr-[8px] mt-[22px] text-[14px] leading-[20px] whitespace-nowrap"><span data-w="435">The registrations have been closed for 2017. For updates of the hack,</span></p>
        <p class="pr-[4px] text-[14px] leading-[20px] whitespace-nowrap"><span data-w="140">go to <span class="text-[#10233c]">fb/csicodespace</span></span></p>
      </section>
    </div>
  </div>
</main>
</div>
<script>
// Condense or widen each label to its set width in pixels.
function fitLabels() {
  document.querySelectorAll('[data-w]').forEach(el => {
    const s = el.style, w = +el.dataset.w;
    s.display = 'inline-block';
    s.whiteSpace = 'nowrap';
    s.flexShrink = '0';
    s.transform = 'none';
    s.marginRight = '0';
    const natural = el.getBoundingClientRect().width;
    s.transformOrigin = '0 50%';
    s.transform = `scaleX(${w / natural})`;
    s.marginRight = `${w - natural}px`;
  });
}
fitLabels();
window.addEventListener('load', fitLabels);
document.fonts.ready.then(fitLabels);
new ResizeObserver(fitLabels).observe(document.querySelector('h1'));
[30, 100, 300].forEach(t => setTimeout(fitLabels, t));
</script>
</body>
</html>
